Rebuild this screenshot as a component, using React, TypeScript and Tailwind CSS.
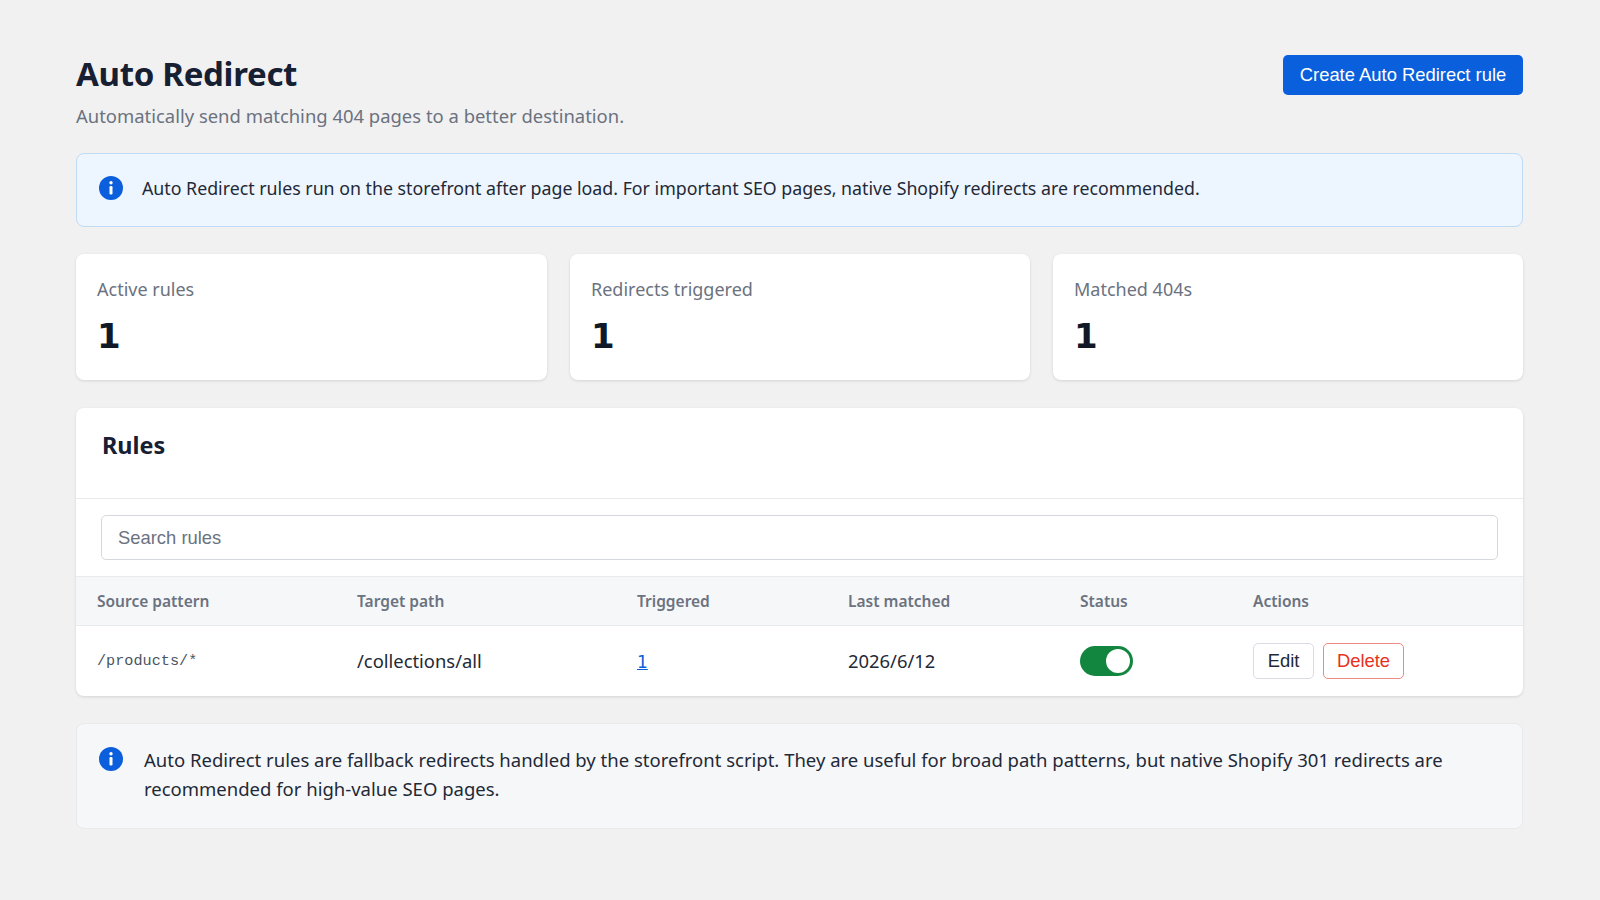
import React from 'react';

const sans = "font-['Noto_Sans',sans-serif]";

function InfoIcon() {
  return (
    <svg viewBox="0 0 24 24" className="h-6 w-6 shrink-0" aria-hidden="true">
      <circle cx="12" cy="12" r="12" fill="#0b5fdc" />
      <circle cx="12" cy="6.8" r="1.7" fill="#fff" />
      <rect x="10.5" y="10" width="3" height="8.5" rx="1.2" fill="#fff" />
    </svg>
  );
}

function StatCard({ label, value }: { label: string; value: string }) {
  return (
    <div className="h-[126px] rounded-lg bg-white px-[21px] pt-[23px] shadow-[0_1px_3px_rgba(0,0,0,0.12)]">
      <div className="text-[18px] leading-[24px] text-[#6b7280]">{label}</div>
      <div className="mt-[12px] font-['DejaVu_Sans',sans-serif] text-[34px] leading-[46px] font-bold text-[#111827]">{value}</div>
    </div>
  );
}

const headers = [
  { label: 'Source pattern', width: 'w-[260px]' },
  { label: 'Target path', width: 'w-[280px]' },
  { label: 'Triggered', width: 'w-[211px]' },
  { label: 'Last matched', width: 'w-[232px]' },
  { label: 'Status', width: 'w-[173px]' },
  { label: 'Actions', width: '' },
];

export default function App() {
  return (
    <div className={`${sans} h-[900px] overflow-hidden bg-[#f1f1f1] pt-[53px] pr-[77px] pl-[76px]`}>
      {/* Page header */}
      <div className="flex items-start justify-between">
        <div>
          <h1 className="text-[33px] leading-[42px] font-bold tracking-[-0.3px] text-[#172033]">Auto Redirect</h1>
          <p className="mt-[8px] text-[18.45px] leading-[26px] text-[#6b7280]">
            Automatically send matching 404 pages to a better destination.
          </p>
        </div>
        <button className="mt-[2px] h-10 w-[240px] rounded-[5px] bg-[#0a5fdc] font-['Liberation_Sans',sans-serif] text-[18.4px] text-white">
          Create Auto Redirect rule
        </button>
      </div>

      <div className="mt-6 flex h-[74px] items-center gap-[19px] rounded-lg border border-[#bfdbf7] bg-[#edf5fe] pr-5 pb-[4px] pl-[22px]">
        <InfoIcon />
        <p className="text-[17.78px] leading-[26px] text-[#1f2937]">
          Auto Redirect rules run on the storefront after page load. For important SEO pages, native Shopify redirects are recommended.
        </p>
      </div>

      <div className="mt-[27px] grid grid-cols-[471px_460px_1fr] gap-[23px]">
        <StatCard label="Active rules" value="1" />
        <StatCard label="Redirects triggered" value="1" />
        <StatCard label="Matched 404s" value="1" />
      </div>

      {/* Rules table */}
      <div className="mt-7 overflow-hidden rounded-lg bg-white shadow-[0_1px_3px_rgba(0,0,0,0.12)]">
        <div className="flex h-[91px] border-b border-[#e8eaed] px-[26px] pt-[21px]">
          <h2 className="text-[23.4px] leading-[32px] font-bold text-[#172033]">Rules</h2>
        </div>
        <div className="border-b border-[#e8eaed] px-[25px] pt-[16px] pb-4">
          <div className="flex h-[45px] items-center rounded-[5px] border border-[#d5d8dd] px-4 font-['Liberation_Sans',sans-serif] text-[18.4px] text-[#6b7280]">
            Search rules
          </div>
        </div>
        <div className="flex h-[49px] items-center border-b border-[#e8eaed] bg-[#f6f7f9] pt-[1px] pl-[21px] text-[15.5px] font-semibold text-[#6b7280]">
          {headers.map((h) => (
            <div key={h.label} className={h.width}>
              {h.label}
            </div>
          ))}
        </div>
        <div className="flex h-[70px] items-center pl-[21px] text-[18.4px] text-[#1f2937]">
          <div className="w-[260px] font-['Liberation_Mono',monospace] text-[15.2px] text-[#4b5563]">/products/*</div>
          <div className="w-[280px]">/collections/all</div>
          <div className="w-[211px]">
            <a href="#" className="font-['DejaVu_Sans',sans-serif] text-[17px] text-[#0a5fdc] underline">1</a>
          </div>
          <div className="w-[232px]">2026/6/12</div>
          <div className="w-[173px]">
            <div className="flex h-[30px] w-[53px] items-center justify-end rounded-full bg-[#12863f] pr-[3px]">
              <div className="h-6 w-6 rounded-full bg-white" />
            </div>
          </div>
          <div className="flex gap-[9px] font-['Liberation_Sans',sans-serif] text-[18.4px]">
            <button className="h-9 w-[61px] rounded-[5px] border border-[#d9dce3] bg-white text-[#1f2937]">Edit</button>
            <button className="h-9 w-[81px] rounded-[5px] border border-[#ee8a7f] bg-white text-[#e8301c]">Delete</button>
          </div>
        </div>
      </div>

      <div className="mt-[27px] flex h-[106px] gap-[21px] rounded-lg border border-[#e8eaee] bg-[#f6f7f9] pt-[21px] pr-14 pl-[22px]">
        <div className="pt-[2px]">
          <InfoIcon />
        </div>
        <p className="text-[18.5px] leading-[29px] text-[#1f2937]">
          Auto Redirect rules are fallback redirects handled by the storefront script. They are useful for broad path patterns, but native Shopify 301 redirects are recommended for high-value SEO pages.
        </p>
      </div>
    </div>
  );
}
